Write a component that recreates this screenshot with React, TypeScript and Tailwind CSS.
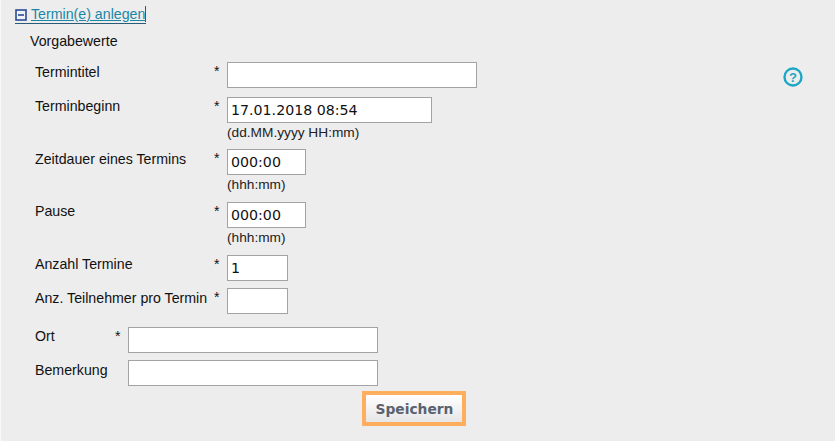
const labelCls = "text-[14.2px] leading-[15px] text-[#111]";
const inputCls = "block h-[26px] border border-[#a3a3a3] bg-white px-[3px] font-['DejaVu_Sans',sans-serif] text-[14.2px] text-[#111] outline-none";

function Row({ label, value, width, hint, mb, pt = "pt-[3px]" }: { label: string; value?: string; width: string; hint?: string; mb: string; pt?: string }) {
  return (
    <div className={`flex items-start ${mb}`}>
      <div className={`w-[179px] ${pt} ${labelCls}`}>{label}</div>
      <div className={`w-[13px] pt-[2px] ${labelCls}`}>*</div>
      <div>
        <input readOnly value={value ?? ""} className={`${inputCls} ${width}`} />
        {hint && <div className="mt-[2px] text-[13.7px] leading-[15px] text-[#222]">{hint}</div>}
      </div>
    </div>
  );
}

export default function App() {
  return (
    <div className="relative h-[441px] w-[835px] overflow-hidden border-l border-l-[#f8f8f8] bg-[#ededed] font-['Liberation_Sans',sans-serif]">
      <div className="flex pl-[14px] pt-[6px]">
        <div className="flex items-center gap-[4px] border-b border-b-[#2a5c7a] pb-[1px]">
          <svg width="12" height="12" viewBox="0 0 12 12" className="mt-[1px]">
            <rect x="1" y="1" width="10" height="10" fill="#eef2f6" stroke="#2a4c94" strokeWidth="1.6" />
            <rect x="3" y="5.2" width="6" height="1.6" fill="#2a4c94" />
          </svg>
          <span className="border-r border-r-[#2a5c7a] text-[14.2px] leading-[16px] text-[#1b87a6] underline">Termin(e) anlegen</span>
        </div>
      </div>
      <div className={`mt-[10px] pl-[29px] ${labelCls}`}>Vorgabewerte</div>
      <div className="pl-[34px] pt-[13px]">
        <Row label="Termintitel" width="w-[250px]" mb="mb-[9px]" />
        <Row label="Terminbeginn" value="17.01.2018 08:54" width="w-[205px]" hint="(dd.MM.yyyy HH:mm)" mb="mb-[9px]" pt="pt-[2px]" />
        <Row label="Zeitdauer eines Termins" value="000:00" width="w-[79px]" hint="(hhh:mm)" mb="mb-[10px]" />
        <Row label="Pause" value="000:00" width="w-[79px]" hint="(hhh:mm)" mb="mb-[10px]" pt="pt-[2px]" />
        <Row label="Anzahl Termine" value="1" width="w-[61px]" mb="mb-[7px]" pt="pt-[2px]" />
        <Row label="Anz. Teilnehmer pro Termin" width="w-[61px]" mb="mb-[13px]" />
        <div className="mb-[7px] flex items-start">
          <div className={`w-[80px] pt-[2px] ${labelCls}`}>Ort</div>
          <div className={`w-[13px] pt-[2px] ${labelCls}`}>*</div>
          <input readOnly value="" className={`${inputCls} w-[250px]`} />
        </div>
        <div className="flex items-start">
          <div className={`w-[93px] pt-[3px] ${labelCls}`}>Bemerkung</div>
          <input readOnly value="" className={`${inputCls} w-[250px]`} />
        </div>
      </div>
      <div className="flex pl-[361px] pt-[5px]">
        <button className="h-[35px] w-[104px] border-[4px] border-[#ffae5e] bg-gradient-to-b from-white to-[#e6e6e6] pl-[1px] pt-[2px] font-['DejaVu_Sans',sans-serif] text-[13.8px] font-bold text-[#5a6270]">
          Speichern
        </button>
      </div>
      <svg width="20" height="20" viewBox="0 0 20 20" className="absolute left-[782px] top-[67px]">
        <circle cx="10" cy="10" r="8.5" fill="none" stroke="#1ba8c6" strokeWidth="2.4" />
        <text x="10" y="14.7" textAnchor="middle" fontSize="13" fontWeight="bold" fill="#1ba8c6" fontFamily="Liberation Sans">?</text>
      </svg>
    </div>
  );
}
